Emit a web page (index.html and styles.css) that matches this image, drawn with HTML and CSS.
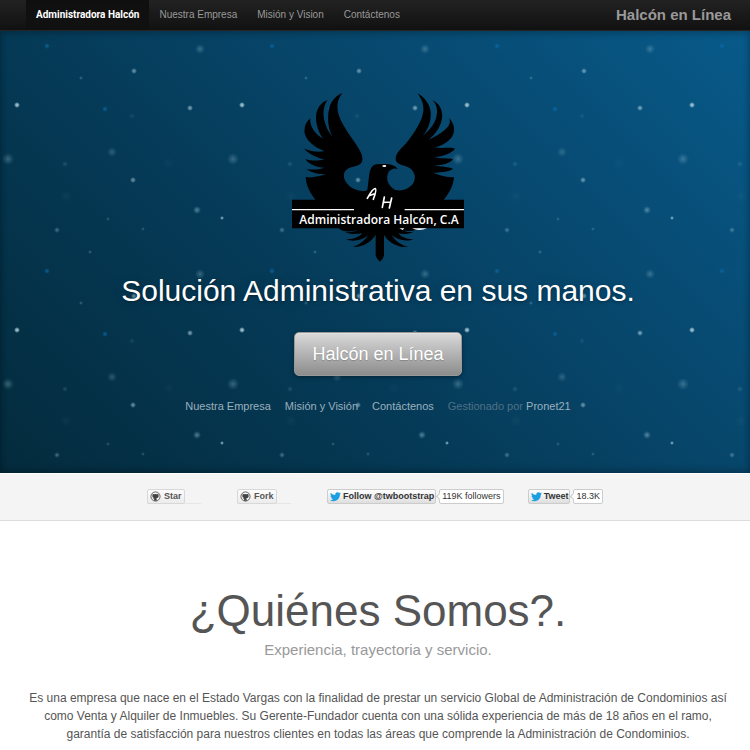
FILE: index.html
```html
<!DOCTYPE html>
<html lang="es">
<head>
<meta charset="utf-8">
<title>Administradora Halcón</title>
<link rel="stylesheet" href="styles.css">
</head>
<body>
<nav class="navbar">
  <div class="nav-links">
    <a class="active" href="#">Administradora Halcón</a>
    <a href="#">Nuestra Empresa</a>
    <a href="#">Misión y Vision</a>
    <a href="#">Contáctenos</a>
  </div>
  <a class="brand" href="#">Halcón en Línea</a>
</nav>

<header class="hero">
  <svg class="stars" aria-hidden="true">
    <defs>
      <radialGradient id="glow"><stop offset="0" stop-color="#b9dbe6" stop-opacity=".6"/><stop offset=".4" stop-color="#8fbfd2" stop-opacity=".4"/><stop offset="1" stop-color="#8fbfd2" stop-opacity="0"/></radialGradient>
      <radialGradient id="bright"><stop offset="0" stop-color="#cfe6ee" stop-opacity=".9"/><stop offset=".5" stop-color="#a9cddb" stop-opacity=".65"/><stop offset="1" stop-color="#a9cddb" stop-opacity="0"/></radialGradient>
      <radialGradient id="blue"><stop offset="0" stop-color="#0a6cae" stop-opacity=".8"/><stop offset="1" stop-color="#0a6cae" stop-opacity="0"/></radialGradient>
      <pattern id="sky" width="225" height="225" patternUnits="userSpaceOnUse">
        <g fill="url(#bright)">
          <circle cx="17" cy="74" r="3"/><circle cx="134" cy="40" r="3" opacity=".6"/>
          <circle cx="190" cy="77" r="3" opacity=".7"/><circle cx="133" cy="149" r="3" opacity=".6"/>
          <circle cx="222" cy="187" r="2" opacity=".8"/><circle cx="81" cy="47" r="2" opacity=".3"/>
        </g>
        <g fill="url(#glow)">
          <circle cx="200" cy="18" r="5" opacity=".5"/><circle cx="8" cy="128" r="6" opacity=".5"/>
          <circle cx="112" cy="121" r="5" opacity=".4"/><circle cx="197" cy="179" r="4" opacity=".8"/>
          <circle cx="132" cy="85" r="3" opacity=".2"/><circle cx="65" cy="133" r="3" opacity=".3"/>
          <circle cx="57" cy="199" r="3" opacity=".7"/><circle cx="108" cy="188" r="2" opacity=".5"/>
          <circle cx="143" cy="198" r="2" opacity=".5"/><circle cx="90" cy="221" r="2" opacity=".6"/>
          <circle cx="66" cy="165" r="6" opacity=".08"/><circle cx="169" cy="132" r="6" opacity=".06"/>
        </g>
        <g fill="url(#blue)"><circle cx="47" cy="15" r="3"/><circle cx="105" cy="78" r="3"/></g>
      </pattern>
    </defs>
    <rect width="100%" height="100%" fill="url(#sky)"/>
  </svg>
  <svg class="logo" viewBox="36 24 516 507" role="img" aria-label="Administradora Halcón, C.A">
    <path d="M187 24C171 45 169 66 176 89C184 114 206 146 225 173C243 200 253 218 244 234C234 247 207 242 195 259C183 281 204 307 231 315C247 320 259 319 262 315C267 285 266 267 272 253C276 240 286 237 300 237L319 237C337 238 351 245 353 253C344 247 333 253 326 260C317 278 322 297 337 309C357 326 390 311 400 294C411 273 401 253 381 245C365 239 350 237 347 224C346 204 363 192 379 174C402 145 427 108 430 79C432 58 424 42 413 25C435 38 451 60 452 82C454 112 442 136 428 153C456 130 470 108 471 82C472 65 466 55 458 46C479 56 489 76 486 100C482 128 464 149 447 164C479 149 503 132 508 117C511 109 509 104 507 99C521 113 526 132 519 149C511 169 485 182 464 187C489 192 512 185 525 191C512 207 484 215 462 216C482 222 504 218 519 223C508 237 481 242 462 241C480 246 506 245 520 252C503 262 478 262 459 264C477 269 501 279 522 276C521 300 507 327 491 344L552 344L552 430L414 430C406 440 381 440 369 435C374 440 389 443 402 440C386 448 369 449 355 445C364 458 388 465 402 462C378 472 352 464 335 450C344 467 365 482 384 486C350 489 322 468 312 449L312 512Q309 523 300 530Q291 523 287 512L287 449C276 469 248 488 217 486C235 482 256 466 264 451C247 466 216 472 197 462C214 465 238 457 247 445C229 448 210 449 194 441C209 443 225 440 232 435C214 441 188 442 176 430L36 430L36 344L106 344C92 326 78 303 77 276C95 281 119 272 139 268C119 267 95 265 80 252C98 256 118 253 133 248C111 247 86 238 76 222C95 229 118 226 133 224C109 216 85 207 73 191C92 198 116 203 133 198C105 188 80 169 74 145C71 126 78 111 91 100C88 121 103 145 129 161C113 139 105 109 109 86C113 66 126 51 142 46C127 67 128 95 137 119C141 132 149 145 158 156C144 133 142 101 146 77C150 52 165 33 187 24Z"/>
    <ellipse class="white" cx="313" cy="243" rx="6" ry="3"/>
    <path class="white" d="M36 372H222V376H36ZM374 372H552V376H374ZM396 430H441Q417 440 396 430ZM358 430H373L368 435Z"/>
    <path class="initials" d="M262 340Q279 309 286 311Q291 313 280 343M267 332L282 327M313 336L307 367M310 352L331 351M335 339L328 369"/>
    <text class="white logo-name" x="297" y="417" text-anchor="middle">Administradora Halcón, C.A</text>
  </svg>
  <h1>Solución Administrativa en sus manos.</h1>
  <button class="cta" type="button">Halcón en Línea</button>
  <div class="hero-links">
    <a href="#">Nuestra Empresa</a>
    <a href="#">Misión y Visión</a>
    <a href="#">Contáctenos</a>
    <span>Gestionado por <a href="#">Pronet21</a></span>
  </div>
</header>

<svg class="symbols" aria-hidden="true">
  <symbol id="github" viewBox="0 0 24 24"><circle cx="12" cy="12" r="10" fill="none" stroke="#555" stroke-width="2"/><path fill="#444" d="M6 6L9 7Q12 6 15 7L18 6L19 12Q18 16 14 16L15 21H9V18L6 16H9L10 16Q5 15 5 11Z"/></symbol>
  <symbol id="bird" viewBox="0 0 24 24"><path fill="#1b9fe0" d="M23.6 4.9c-.9.4-1.800.7-2.800.8 1-.6 1.800-1.600 2.200-2.700-1 .6-2 1-3.100 1.200A4.900 4.900 0 0 0 11.500 8.600C7.700 8.400 4.100 6.600 1.700 3.600 0 6.600 1.400 9 3.200 10.200c-.8 0-1.600-.2-2.200-.6 0 2.300 1.600 4.400 3.900 4.900-.7.200-1.500.2-2.200.1.600 2 2.400 3.400 4.600 3.400A10 10 0 0 1 0 20c2.200 1.400 4.800 2.200 7.500 2.200 9.100 0 14.300-7.700 14-14.600.9-.7 1.700-1.600 2.100-2.700z"/></symbol>
</svg>

<section class="social">
  <div class="star-frame"><button class="pill github" type="button"><svg><use href="#github"/></svg>Star</button></div>
  <div class="star-frame"><button class="pill github" type="button"><svg><use href="#github"/></svg>Fork</button></div>
  <div class="pair"><button class="pill" type="button"><svg><use href="#bird"/></svg>Follow @twbootstrap</button><a class="count" href="#">119K followers</a></div>
  <div class="pair"><button class="pill" type="button"><svg><use href="#bird"/></svg>Tweet</button><a class="count" href="#">18.3K</a></div>
</section>

<main class="about">
  <h2>¿Quiénes Somos?.</h2>
  <p class="tagline">Experiencia, trayectoria y servicio.</p>
  <p class="intro">Es una empresa que nace en el Estado Vargas con la finalidad de prestar un servicio Global de Administración de Condominios así como Venta y Alquiler de Inmuebles. Su Gerente-Fundador cuenta con una sólida experiencia de más de 18 años en el ramo, garantía de satisfacción para nuestros clientes en todas las áreas que comprende la Administración de Condominios.</p>
</main>
</body>
</html>
```
FILE: styles.css
```css
* { box-sizing: border-box; }
body { margin: 0; background: #fff; color: #555; font-family: "Liberation Sans", Arial, sans-serif; }
a { color: inherit; text-decoration: none; }
button { font-family: inherit; cursor: pointer; }

.navbar { display: flex; justify-content: space-between; height: 31px; padding: 0 19px 0 26px; background: linear-gradient(#222, #111); border-bottom: 1px solid #252525; }
.nav-links { display: flex; }
.nav-links a { padding: 0 10px; font-size: 10px; line-height: 30px; color: #999; }
.nav-links .active { color: #fff; background: #111; font-family: Roboto, sans-serif; font-weight: bold; box-shadow: inset 0 3px 8px rgba(0, 0, 0, .13); }
.brand { font-size: 15px; line-height: 30px; font-weight: bold; color: #999; }

.hero { position: relative; isolation: isolate; display: flex; flex-direction: column; align-items: center; padding: 62px 22px 59px 28px; color: #fff; text-align: center; background: linear-gradient(45deg, #042b3d 0%, #053955 36%, #07466b 62%, #085a8a 100%); box-shadow: inset 0 3px 7px rgba(0, 0, 0, .2), inset 0 -3px 7px rgba(0, 0, 0, .2); }
.stars { position: absolute; z-index: -1; inset: 0; width: 100%; height: 100%; pointer-events: none; }
.logo { width: 172px; height: 169px; }
.white { fill: #fff; }
.initials { fill: none; stroke: #fff; stroke-width: 5; stroke-linecap: round; stroke-linejoin: round; }
.logo-name { font: 600 36px "Open Sans", sans-serif; }
h1 { margin: 10px 0 22px; font-size: 30px; line-height: 38px; font-weight: normal; text-shadow: 0 1px 3px rgba(0, 0, 0, .4), 0 0 30px rgba(0, 0, 0, .08); }
.cta { height: 44px; padding: 0 17px; border: 1px solid #999; border-radius: 5px; color: #fff; font-size: 18px; line-height: 42px; background: linear-gradient(#dadada, #8c8c8c); box-shadow: inset 0 1px 0 rgba(255, 255, 255, .2), 0 1px 4px rgba(0, 0, 0, .4); text-shadow: 0 1px 1px rgba(0, 0, 0, .2); }
.hero-links { display: flex; gap: 14px; margin-top: 22px; font-size: 11px; line-height: 16px; color: #9bb0bd; }
.hero-links span { color: #4f7085; }
.hero-links span a { color: #9bb0bd; }

.symbols { position: absolute; width: 0; height: 0; }
.social { display: flex; justify-content: center; align-items: center; gap: 24px; height: 48px; padding-bottom: 2px; background: #f4f4f4; border-top: 1px solid #fff; border-bottom: 1px solid #ddd; }
.star-frame { display: flex; width: 66px; padding-right: 12px; background: linear-gradient(#e6e6e6, #e6e6e6) left bottom / 54px 1px no-repeat; }
.pill { display: flex; align-items: center; gap: 2px; height: 15px; padding: 0 1px 0 2px; border: 1px solid #ccc; border-radius: 2px; background: linear-gradient(#fff, #dedede); color: #333; font-size: 9px; line-height: 13px; font-weight: bold; white-space: nowrap; }
.pill svg { width: 11px; height: 11px; }
.github { gap: 3px; padding: 0 2px; border-color: #d8d8d8; background: linear-gradient(#fcfcfc, #ececec); color: #555; }
.pair { display: flex; gap: 3px; }
.count { position: relative; height: 15px; padding: 0 2px; border: 1px solid #ccc; border-radius: 2px; background: #fff; color: #333; font-size: 9px; line-height: 13px; white-space: nowrap; }
.count::before { content: ""; position: absolute; left: -3px; top: 4px; width: 4px; height: 4px; border: solid #ccc; border-width: 0 0 1px 1px; background: #fff; transform: rotate(45deg); }

.about { padding: 64px 22px 8px 28px; text-align: center; }
h2 { margin: 0; font-size: 44px; line-height: 52px; font-weight: normal; }
.tagline { margin: 4px 0 30px; font-size: 15px; line-height: 18px; color: #999; }
.intro { margin: 0; font-size: 12px; line-height: 18px; }
```
